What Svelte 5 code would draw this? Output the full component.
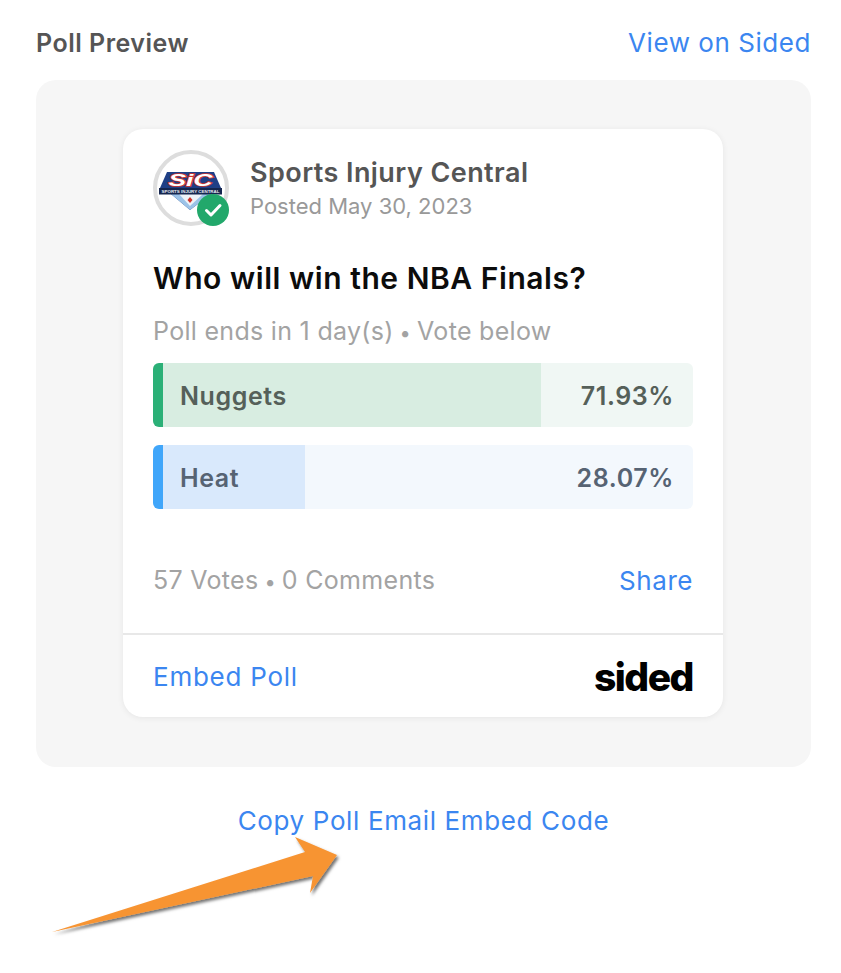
<script>
  const options = [
    { name: 'Nuggets', pct: '71.93%', width: 71.3, cls: 'green' },
    { name: 'Heat', pct: '28.07%', width: 26.8, cls: 'blue' }
  ];
</script>

<div class="page">
  <header class="top">
    <span class="title">Poll Preview</span>
    <span class="link">View on Sided</span>
  </header>

  <section class="panel">
    <article class="card">
      <div class="body">
        <div class="author">
          <div class="avatar">
            <svg class="logo" viewBox="0 0 64 40" aria-hidden="true">
              <path d="M8 1 L55 1 L62 17 L62 23 L52 23 L31 39 L12 23 L1 23 L1 17 Z" fill="#1f3f86"/>
              <path d="M12 23 L52 23 L31 39 Z" fill="#9cc3e8"/>
              <path d="M20 23 L44 23 L31 35 Z" fill="#eef3f8"/>
              <rect x="0" y="17" width="63" height="6.5" fill="#15264f"/>
              <text x="31.5" y="15" class="sic" textLength="44" lengthAdjust="spacingAndGlyphs">SiC</text>
              <text x="31.5" y="22" class="sub" textLength="58" lengthAdjust="spacingAndGlyphs">SPORTS INJURY CENTRAL</text>
              <path d="M31 26 L33.5 29 L31 32 L28.5 29 Z" fill="#d0342c"/>
            </svg>
            <span class="badge">
              <svg viewBox="0 0 32 32" aria-hidden="true"><path d="M9.5 16.5 L14 21 L23 11.5" fill="none" stroke="#fff" stroke-width="3" stroke-linecap="round" stroke-linejoin="round"/></svg>
            </span>
          </div>
          <div class="who">
            <div class="name">Sports Injury Central</div>
            <div class="posted">Posted May 30, 2023</div>
          </div>
        </div>

        <h2 class="question">Who will win the NBA Finals?</h2>
        <p class="meta">Poll ends in 1 day(s)<span class="dot">{' • '}</span>Vote below</p>

        <div class="options">
          {#each options as o}
            <div class="option {o.cls}">
              <div class="fill" style="width: {o.width}%"></div>
              <span class="oname">{o.name}</span>
              <span class="pct">{o.pct}</span>
            </div>
          {/each}
        </div>

        <div class="stats">
          <span class="gray">57 Votes<span class="dot">{' • '}</span>0 Comments</span>
          <span class="link">Share</span>
        </div>
      </div>
      <footer class="foot">
        <span class="link embed">Embed Poll</span>
        <span class="brand">sided</span>
      </footer>
    </article>
  </section>

  <div class="copy"><span class="link copytext">Copy Poll Email Embed Code</span></div>

  <svg class="arrow" viewBox="0 0 841 973" aria-hidden="true">
    <defs>
      <filter id="sh" x="-10%" y="-10%" width="120%" height="130%">
        <feDropShadow dx="2" dy="2.5" stdDeviation="1.5" flood-color="#000" flood-opacity="0.55"/>
      </filter>
    </defs>
    <polygon points="295,837 337,855 310,893 313,876 52,932 305,852" fill="#f79433" filter="url(#sh)"/>
  </svg>
</div>

<style>
  :global(body) {
    margin: 0;
    background: #fff;
  }
  .page {
    position: relative;
    width: 841px;
    height: 973px;
    box-sizing: border-box;
    padding: 26px 30px 0 36px;
    font-family: Inter, "Liberation Sans", sans-serif;
    overflow: hidden;
  }
  .top {
    display: flex;
    justify-content: space-between;
    align-items: center;
    height: 33px;
    margin-bottom: 21px;
  }
  .title {
    font-size: 25px;
    font-weight: 600;
    letter-spacing: 0.5px;
    color: #555;
  }
  .link {
    color: #3b86f0;
    font-size: 26px;
    letter-spacing: 0.55px;
  }
  .embed {
    letter-spacing: 0.75px;
  }
  .copytext {
    letter-spacing: 0.63px;
  }
  .panel {
    background: #f6f6f6;
    border-radius: 20px;
    height: 687px;
    box-sizing: border-box;
    padding: 49px 88px 0 87px;
  }
  .card {
    background: #fff;
    border-radius: 20px;
    height: 588px;
    box-shadow: 0 1px 6px rgba(0, 0, 0, 0.07);
    display: flex;
    flex-direction: column;
  }
  .body {
    flex: 1;
    padding: 20px 30px 0 30px;
    display: flex;
    flex-direction: column;
  }
  .author {
    display: flex;
    gap: 21px;
    align-items: center;
    height: 78px;
  }
  .avatar {
    position: relative;
    width: 76px;
    height: 76px;
    box-sizing: border-box;
    border: 4px solid #ddd;
    border-radius: 50%;
    flex: none;
    display: flex;
    align-items: center;
    justify-content: center;
  }
  .logo {
    width: 64px;
    height: 40px;
    margin-top: 5px;
    flex: none;
  }
  .sic {
    font-family: "Liberation Sans", sans-serif;
    font-size: 17px;
    font-weight: 700;
    font-style: italic;
    fill: #fff;
    stroke: #d0342c;
    stroke-width: 1.6px;
    paint-order: stroke;
    text-anchor: middle;
  }
  .sub {
    font-family: "Liberation Sans", sans-serif;
    font-size: 4.4px;
    font-weight: 700;
    fill: #e8edf5;
    text-anchor: middle;
  }
  .badge {
    position: absolute;
    right: -4px;
    bottom: -4px;
    width: 32px;
    height: 32px;
    border-radius: 50%;
    background: #22a86b;
  }
  .badge svg {
    display: block;
    width: 32px;
    height: 32px;
  }
  .name {
    font-size: 27px;
    font-weight: 600;
    letter-spacing: 0.43px;
    color: #555;
    line-height: 36px;
  }
  .posted {
    font-size: 22px;
    color: #999;
    line-height: 30px;
  }
  .question {
    margin: 30px 0 0;
    font-size: 30px;
    font-weight: 600;
    letter-spacing: 0.55px;
    color: #0c0c0c;
    line-height: 42px;
  }
  .meta {
    margin: 15px 0 0;
    height: 34px;
    font-size: 25px;
    letter-spacing: 0.3px;
    color: #a3a3a3;
    line-height: 34px;
  }
  .dot {
    font-size: 20px;
    line-height: 1;
    white-space: pre;
  }
  .options {
    display: flex;
    flex-direction: column;
    gap: 18px;
    margin-top: 15px;
  }
  .option {
    position: relative;
    height: 64px;
    box-sizing: border-box;
    border-radius: 6px;
    border-left: 10px solid;
    display: flex;
    align-items: center;
    justify-content: space-between;
    padding: 2px 19px 0 17px;
    overflow: hidden;
    font-size: 25px;
    font-weight: 600;
    letter-spacing: 0.6px;
  }
  .fill {
    position: absolute;
    left: 0;
    top: 0;
    bottom: 0;
  }
  .oname, .pct {
    position: relative;
  }
  .green {
    background: #f0f7f4;
    border-color: #2bb077;
    color: #556059;
  }
  .green .fill {
    background: #d8ede1;
  }
  .blue {
    background: #f3f8fd;
    border-color: #40a6fa;
    color: #566373;
  }
  .blue .fill {
    background: #d9e9fc;
  }
  .stats {
    display: flex;
    justify-content: space-between;
    align-items: center;
    margin-top: 53px;
    height: 36px;
  }
  .gray {
    font-size: 25px;
    letter-spacing: 0.3px;
    color: #a3a3a3;
  }
  .foot {
    border-top: 2px solid #e8e8e8;
    height: 84px;
    box-sizing: border-box;
    padding: 0 30px;
    display: flex;
    justify-content: space-between;
    align-items: center;
  }
  .brand {
    font-size: 39px;
    font-weight: 800;
    color: #000;
    letter-spacing: -1.5px;
  }
  .copy {
    text-align: center;
    margin-top: 36px;
    line-height: 36px;
  }
  .arrow {
    position: absolute;
    inset: 0;
    width: 841px;
    height: 973px;
    pointer-events: none;
  }
</style>
